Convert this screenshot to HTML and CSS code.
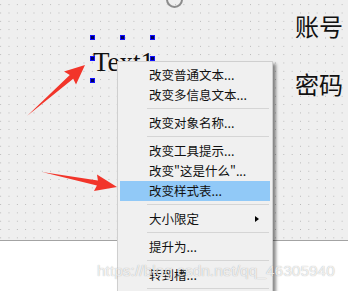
FILE: index.html
```html
<!DOCTYPE html>
<html lang="zh-CN">
  <head>
    <meta charset="UTF-8" />
    <meta name="viewport" content="width=device-width, initial-scale=1.0" />
    <title>Qt Designer - 右键菜单</title>
    <link rel="stylesheet" href="styles.css">
  </head>
  <body>
    <!-- Form canvas -->
    <div class="form">
      <div class="radio-ring"></div>
      <div class="label-text">Text1</div>
      <span class="handle h1"></span>
      <span class="handle h2"></span>
      <span class="handle h3"></span>
      <span class="handle h4"></span>
      <span class="handle h5"></span>
      <span class="handle h6"></span>
      <div class="label-cn account">账号</div>
      <div class="label-cn password">密码</div>
    </div>

    <!-- Context menu -->
    <div class="menu">
      <div class="item">改变普通文本...</div>
      <div class="item">改变多信息文本...</div>
      <div class="sep"></div>
      <div class="item">改变对象名称...</div>
      <div class="sep"></div>
      <div class="item">改变工具提示...</div>
      <div class="item">改变"这是什么"...</div>
      <div class="item active">改变样式表...</div>
      <div class="sep"></div>
      <div class="item sub">大小限定<span class="caret"></span></div>
      <div class="sep"></div>
      <div class="item">提升为...</div>
      <div class="sep"></div>
      <div class="item">转到槽...</div>
      <div class="sep"></div>
    </div>

    <!-- Annotation arrows -->
    <svg class="arrows" width="348" height="291" viewBox="0 0 348 291">
      <polygon fill="#f2352a" points="27,116 73.2,78.8 76,84.5 85,65 64,71.5 69.8,75 " />
      <polygon fill="#f2352a" points="42,172 96.9,185.5 94,191 117,187 97,174.5 97.9,180.6" />
    </svg>

    <div class="watermark">https://blog.csdn.net/qq_46305940</div>
  </body>
</html>
```

FILE: styles.css
```css
* {
  margin: 0;
  padding: 0;
  box-sizing: border-box;
}

body {
  width: 348px;
  height: 291px;
  position: relative;
  overflow: hidden;
  background: #ffffff;
  font-family: "Noto Sans CJK SC", "Liberation Sans", sans-serif;
}

.form {
  position: relative;
  height: 241px;
  background-color: #efefef;
  background-image: radial-gradient(circle, #b4b4b4 0.55px, transparent 0.9px);
  background-size: 8.333px 8.333px;
  background-position: -3.5px 0.5px;
  border-bottom: 1px solid #a3a3a3;
}

.radio-ring {
  position: absolute;
  left: 166px;
  top: -9px;
  width: 17px;
  height: 17px;
  border: 2px solid #8c8c8c;
  border-radius: 50%;
}

.label-text {
  position: absolute;
  left: 93px;
  top: 47px;
  font-family: "Liberation Serif", serif;
  font-size: 27px;
  line-height: 30px;
  color: #111;
}

.handle {
  position: absolute;
  width: 5px;
  height: 5px;
  background: #000060;
  border: 1px solid #1010ff;
}

.h1 { left: 90px; top: 35px; }
.h2 { left: 120px; top: 35px; }
.h3 { left: 150px; top: 35px; }
.h4 { left: 90px; top: 56px; }
.h5 { left: 150px; top: 56px; }
.h6 { left: 90px; top: 78px; }

.label-cn {
  position: absolute;
  left: 295px;
  font-size: 24px;
  color: #111;
  white-space: nowrap;
}

.account { top: 8px; }
.password { top: 66px; }

.menu {
  position: absolute;
  left: 117px;
  top: 61px;
  width: 156px;
  padding: 3px 2px;
  background: #f0f0f0;
  border: 1px solid #cfcfcf;
  box-shadow: 3px 3px 3px rgba(0, 0, 0, 0.45);
}

.item {
  position: relative;
  height: 20px;
  line-height: 20px;
  padding-left: 29px;
  font-size: 12.5px;
  color: #111;
  white-space: nowrap;
}

.item.active {
  background: #91c9f7;
}

.caret {
  position: absolute;
  right: 11px;
  top: 7px;
  border-left: 4px solid #000;
  border-top: 3.5px solid transparent;
  border-bottom: 3.5px solid transparent;
}

.sep {
  height: 8px;
  margin-left: 27px;
  margin-right: 1px;
  padding-top: 3px;
}

.sep::before {
  content: "";
  display: block;
  height: 1px;
  background: #d5d5d5;
}

.arrows {
  position: absolute;
  left: 0;
  top: 0;
}

.watermark {
  position: absolute;
  left: 97px;
  top: 262px;
  font-family: "Liberation Sans", sans-serif;
  font-size: 15.5px;
  color: rgba(255, 255, 255, 0.8);
  text-shadow: 0 0 1px rgba(0, 0, 0, 0.35);
  white-space: nowrap;
}
```
